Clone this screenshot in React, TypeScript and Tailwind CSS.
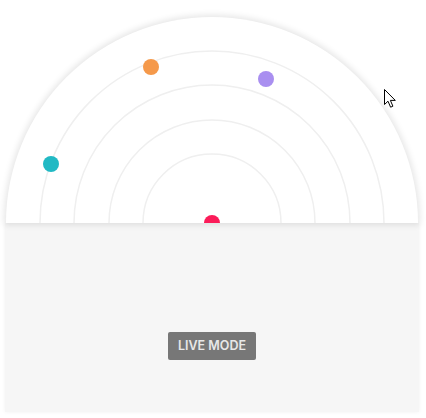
import React from "react";

export default function App() {
  const arcs = [69, 103, 138, 172];
  return (
    <div className="relative w-[426px] h-[418px] bg-white overflow-hidden pt-[17px]">
      <div className="ml-[6px] w-[412px] h-[206px] rounded-t-[206px] bg-white overflow-hidden shadow-[0_0_6px_2px_rgba(0,0,0,0.1)] relative z-10">
        <svg width="412" height="206" viewBox="0 0 412 206">
          {arcs.map((r) => (
            <path
              key={r}
              d={`M ${206 - r} 206 A ${r} ${r} 0 0 1 ${206 + r} 206`}
              fill="none"
              stroke="#efefef"
              strokeWidth="1.5"
            />
          ))}
          <circle cx="145" cy="50" r="8" fill="#f5994a" />
          <circle cx="260" cy="62" r="8" fill="#a98ff0" />
          <circle cx="45" cy="147" r="8" fill="#21b9c4" />
          <circle cx="206" cy="206" r="8" fill="#fb1c59" />
        </svg>
      </div>
      <div className="ml-[5px] w-[414px] h-[189px] bg-[#f6f6f6] shadow-[0_0_4px_rgba(0,0,0,0.06)] flex justify-center pt-[109px]">
        <div
          className="h-[28px] w-[88px] rounded-[2px] bg-[#777777] flex items-center justify-center text-[12.5px] font-semibold text-[#e8e8e8]"
          style={{ fontFamily: "Inter, 'Open Sans', sans-serif" }}
        >
          LIVE MODE
        </div>
      </div>
      <svg
        className="absolute left-[384px] top-[89px] z-20"
        width="13"
        height="20"
        viewBox="0 0 13 20"
      >
        <path
          d="M0.5 0.5 L0.5 15.5 L4 12.2 L6.6 18.2 L8.9 17.2 L6.4 11.4 L11.3 11.4 Z"
          fill="white"
          stroke="black"
          strokeWidth="1"
          strokeLinejoin="round"
        />
      </svg>
    </div>
  );
}
